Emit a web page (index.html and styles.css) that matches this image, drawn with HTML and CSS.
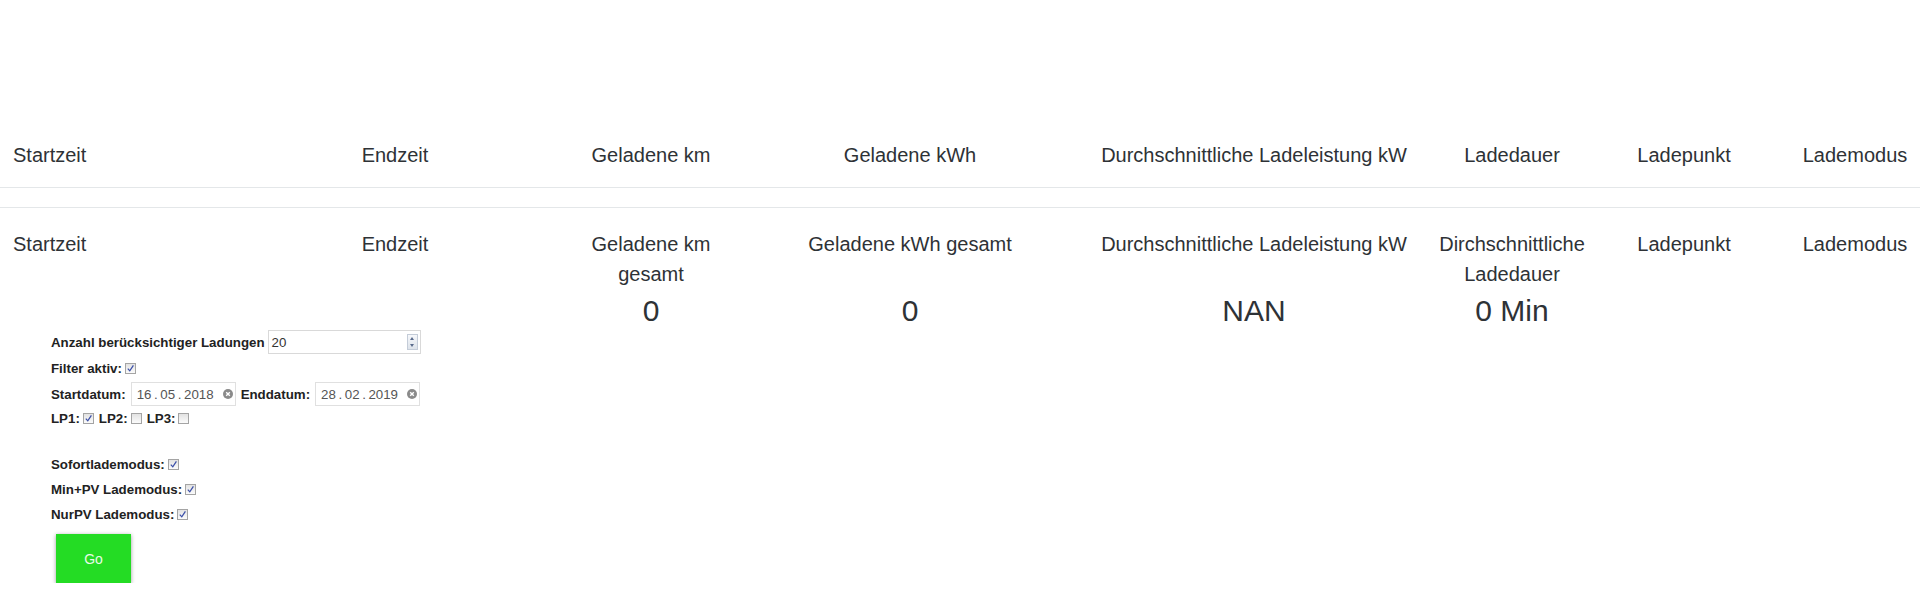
FILE: index.html
```html
<!DOCTYPE html>
<html lang="de">
<head>
<meta charset="utf-8">
<title>Ladelog</title>
<link rel="stylesheet" href="styles.css">
</head>
<body>
<main class="page">
  <section class="log">
    <div class="row head">
      <div class="cell c1">Startzeit</div>
      <div class="cell c2">Endzeit</div>
      <div class="cell c3">Geladene km</div>
      <div class="cell c4">Geladene kWh</div>
      <div class="cell c5">Durchschnittliche Ladeleistung kW</div>
      <div class="cell c6">Ladedauer</div>
      <div class="cell c7">Ladepunkt</div>
      <div class="cell c8">Lademodus</div>
    </div>
    <div class="row sums">
      <div class="cell c1">Startzeit</div>
      <div class="cell c2">Endzeit</div>
      <div class="cell c3">Geladene km gesamt</div>
      <div class="cell c4">Geladene kWh gesamt</div>
      <div class="cell c5">Durchschnittliche Ladeleistung kW</div>
      <div class="cell c6">Dirchschnittliche Ladedauer</div>
      <div class="cell c7">Ladepunkt</div>
      <div class="cell c8">Lademodus</div>
    </div>
    <div class="row values">
      <div class="cell c1"></div>
      <div class="cell c2"></div>
      <div class="cell c3">0</div>
      <div class="cell c4">0</div>
      <div class="cell c5">NAN</div>
      <div class="cell c6">0 Min</div>
      <div class="cell c7"></div>
      <div class="cell c8"></div>
    </div>
  </section>

  <form class="filters">
    <div class="line l1">
      <span class="lbl">Anzahl berücksichtiger Ladungen</span>
      <span class="num"><span class="numval">20</span><span class="spin"><span class="up"></span><span class="down"></span></span></span>
    </div>
    <div class="line l2">
      <span class="lbl">Filter aktiv:</span>
      <span class="cb on"><svg viewBox="0 0 10 10" width="9" height="9"><path d="M2 5.2 L4.2 7.6 L8.2 1.6" fill="none" stroke="#3b4fa8" stroke-width="1.4"/></svg></span>
    </div>
    <div class="line l3">
      <span class="lbl">Startdatum:</span>
      <span class="date">16<span class="dot">.</span>05<span class="dot">.</span>2018<svg class="clr" viewBox="0 0 10 10" width="10" height="10"><circle cx="5" cy="5" r="5" fill="#8a8a8a"/><path d="M3.2 3.2 L6.8 6.8 M6.8 3.2 L3.2 6.8" stroke="#fff" stroke-width="1.4"/></svg></span>
      <span class="lbl gap">Enddatum:</span>
      <span class="date">28<span class="dot">.</span>02<span class="dot">.</span>2019<svg class="clr" viewBox="0 0 10 10" width="10" height="10"><circle cx="5" cy="5" r="5" fill="#8a8a8a"/><path d="M3.2 3.2 L6.8 6.8 M6.8 3.2 L3.2 6.8" stroke="#fff" stroke-width="1.4"/></svg></span>
    </div>
    <div class="line l4">
      <span class="lbl">LP1:</span>
      <span class="cb on"><svg viewBox="0 0 10 10" width="9" height="9"><path d="M2 5.2 L4.2 7.6 L8.2 1.6" fill="none" stroke="#3b4fa8" stroke-width="1.4"/></svg></span>
      <span class="lbl gap">LP2:</span>
      <span class="cb"></span>
      <span class="lbl gap">LP3:</span>
      <span class="cb"></span>
    </div>
    <div class="line l6">
      <span class="lbl">Sofortlademodus:</span>
      <span class="cb on"><svg viewBox="0 0 10 10" width="9" height="9"><path d="M2 5.2 L4.2 7.6 L8.2 1.6" fill="none" stroke="#3b4fa8" stroke-width="1.4"/></svg></span>
    </div>
    <div class="line l7">
      <span class="lbl">Min+PV Lademodus:</span>
      <span class="cb on"><svg viewBox="0 0 10 10" width="9" height="9"><path d="M2 5.2 L4.2 7.6 L8.2 1.6" fill="none" stroke="#3b4fa8" stroke-width="1.4"/></svg></span>
    </div>
    <div class="line l8">
      <span class="lbl">NurPV Lademodus:</span>
      <span class="cb on"><svg viewBox="0 0 10 10" width="9" height="9"><path d="M2 5.2 L4.2 7.6 L8.2 1.6" fill="none" stroke="#3b4fa8" stroke-width="1.4"/></svg></span>
    </div>
    <button type="button" class="go">Go</button>
  </form>
</main>
</body>
</html>
```
FILE: styles.css
```css
html, body {
  margin: 0;
  background: #fff;
}
body {
  font-family: "Liberation Sans", Arial, sans-serif;
  color: #2e3236;
}
.log {
  padding-top: 125px;
}
.row {
  display: flex;
  align-items: flex-start;
  font-size: 20px;
  line-height: 30px;
}
.head {
  padding: 15px 0 17px;
  border-bottom: 1px solid #e4e7e9;
}
.sums {
  margin-top: 19px;
  border-top: 1px solid #e4e7e9;
  padding-top: 21px;
}
.values {
  margin-top: 4px;
  font-size: 30px;
  line-height: 36px;
  min-height: 36px;
}
.cell {
  flex: none;
  text-align: center;
}
.c1 { margin-left: 13px; width: 180px; text-align: left; }
.c2 { margin-left: 127px; width: 150px; }
.c3 { margin-left: 111px; width: 140px; }
.c4 { margin-left: 74px; width: 230px; }
.c5 { margin-left: 59px; width: 340px; }
.c6 { margin-left: 8px; width: 160px; }
.c7 { margin-left: 22px; width: 140px; }
.c8 { margin-left: 36px; width: 130px; }

.filters {
  margin-top: 1px;
  padding-left: 51px;
  font-size: 13.3px;
  color: #222;
}
.line {
  display: flex;
  align-items: center;
  height: 24px;
}
.l2, .l3 { margin-top: 2px; }
.l6 { margin-top: 22px; }
.l7, .l8 { margin-top: 1px; }
.lbl {
  font-weight: bold;
  white-space: nowrap;
}
.lbl.gap { margin-left: 5px; }

.num {
  margin-left: 3px;
  width: 153px;
  height: 24px;
  box-sizing: border-box;
  border: 1px solid #d9d9d9;
  display: flex;
  align-items: center;
  justify-content: space-between;
  padding: 0 2px 0 3px;
  color: #333;
}
.spin {
  width: 11px;
  height: 16px;
  box-sizing: border-box;
  border: 1px solid #c4ccd8;
  background: linear-gradient(#f6f8fb, #dde3ea);
  display: flex;
  flex-direction: column;
  align-items: center;
  justify-content: space-around;
}
.up, .down {
  width: 0;
  height: 0;
  border-left: 2.5px solid transparent;
  border-right: 2.5px solid transparent;
}
.up { border-bottom: 3px solid #5a6b8c; }
.down { border-top: 3px solid #5a6b8c; }

.date {
  margin-left: 5px;
  width: 105px;
  height: 24px;
  box-sizing: border-box;
  border: 1px solid #e0e0e0;
  display: flex;
  align-items: center;
  padding: 0 2px 0 5px;
  color: #555;
  white-space: nowrap;
}
.dot { margin: 0 2.6px; }
.clr { margin-left: auto; }

.cb {
  width: 11px;
  height: 11px;
  box-sizing: border-box;
  margin-left: 3px;
  border: 1px solid #a4a4a4;
  background: linear-gradient(#e2e2e2, #fbfbfb);
  display: inline-flex;
  align-items: center;
  justify-content: center;
}

.go {
  display: block;
  margin: 8px 0 0 5px;
  width: 75px;
  height: 49px;
  border: none;
  background: #24dc24;
  color: #e8fbe8;
  font-family: "Liberation Sans", Arial, sans-serif;
  font-size: 14px;
  box-shadow: 0 1px 4px rgba(0, 0, 0, 0.4);
  padding: 0;
}
```
